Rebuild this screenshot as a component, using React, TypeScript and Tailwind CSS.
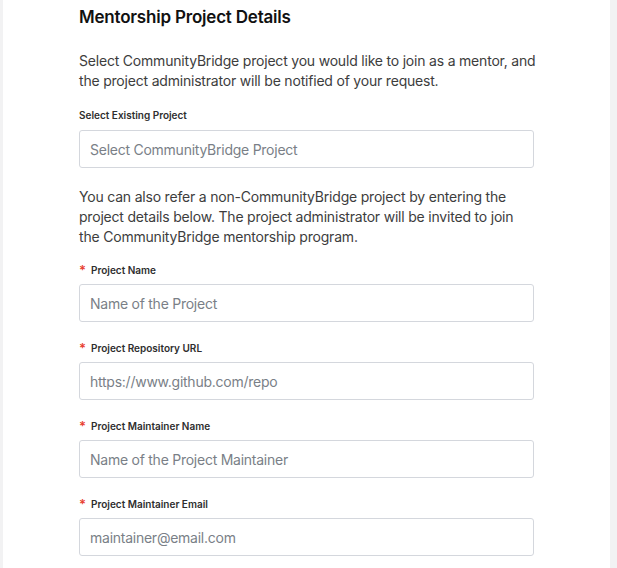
import React from 'react';

interface FieldProps {
  label: string;
  placeholder: string;
  required?: boolean;
  type?: string;
}

function Field({ label, placeholder, required, type = 'text' }: FieldProps) {
  return (
    <div className="mt-[19px] first:mt-[16px]">
      <label className="flex h-[14px] items-center text-[10px] font-semibold leading-[14px] text-[#2e2e2e]">
        {required && <span className="mr-[5px] text-[13px] leading-none text-[#e8402f]">*</span>}
        {label}
      </label>
      <input
        type={type}
        placeholder={placeholder}
        className="mt-[7px] block h-[38px] w-full rounded-[3px] border border-[#d4d7dd] bg-white px-[10px] text-[14px] tracking-[-0.25px] text-[#333] placeholder:text-[#7a7f87] outline-none"
      />
    </div>
  );
}

export default function App() {
  return (
    <div
      className="flex h-[568px] w-full bg-[#f2f2f3] pl-[3px] pr-[7px]"
      style={{ fontFamily: 'Inter, "Noto Sans", sans-serif' }}
    >
      <div className="h-full flex-1 overflow-hidden bg-white pl-[76px]">
        <div className="w-[455px]">
          <h2 className="pt-[5px] text-[17px] font-semibold leading-[24px] tracking-[-0.2px] text-[#111]">
            Mentorship Project Details
          </h2>
          <p className="mt-[22px] w-[470px] text-[14px] leading-[20px] tracking-[-0.2px] text-[#3d3d3d]">
            Select CommunityBridge project you would like to join as a mentor, and the project
            administrator will be notified of your request.
          </p>
          <label className="mt-[17px] block text-[10px] font-semibold leading-[14px] text-[#2e2e2e]">
            Select Existing Project
          </label>
          <input
            placeholder="Select CommunityBridge Project"
            className="mt-[8px] block h-[38px] w-full rounded-[3px] border border-[#d4d7dd] bg-white px-[10px] text-[14px] tracking-[-0.25px] placeholder:text-[#7a7f87] outline-none"
          />
          <p className="mt-[19px] text-[14px] leading-[20px] tracking-[-0.2px] text-[#3d3d3d]">
            You can also refer a non-CommunityBridge project by entering the project details
            below. The project administrator will be invited to join the CommunityBridge
            mentorship program.
          </p>
          <div>
            <Field required label="Project Name" placeholder="Name of the Project" />
            <Field required label="Project Repository URL" placeholder="https://www.github.com/repo" />
            <Field required label="Project Maintainer Name" placeholder="Name of the Project Maintainer" />
            <Field required label="Project Maintainer Email" placeholder="maintainer@email.com" type="email" />
          </div>
        </div>
      </div>
    </div>
  );
}
